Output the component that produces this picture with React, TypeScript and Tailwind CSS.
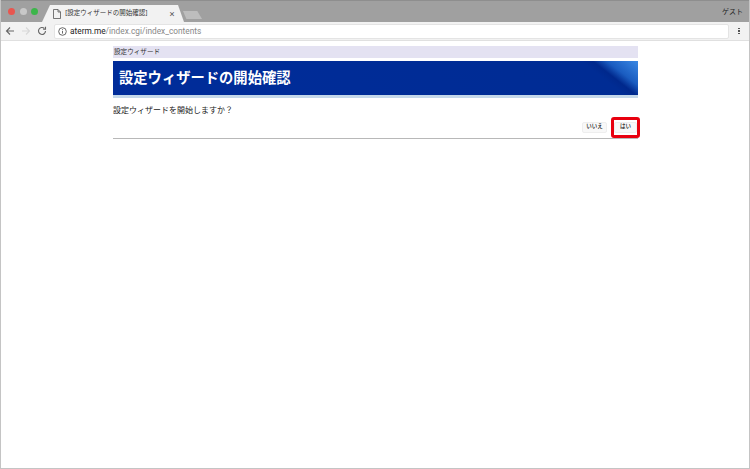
const font = "font-['Inter','Noto_Sans_CJK_JP',sans-serif]";

const App = () => {
  return (
    <div className={`w-[750px] h-[469px] bg-white border border-[#c4c4c4] border-t-0 overflow-hidden flex flex-col ${font}`}>
      {/* title bar */}
      <div className="h-[22px] shrink-0 bg-[#a0a0a0] border-t border-[#8e8e8e] flex items-end relative">
        <div className="flex gap-[4.5px] pl-[7px] self-center w-[41px] shrink-0">
          <span className="w-[7px] h-[7px] shrink-0 rounded-full bg-[#e8564f]" />
          <span className="w-[7px] h-[7px] shrink-0 rounded-full bg-[#c8c8c8]" />
          <span className="w-[7px] h-[7px] shrink-0 rounded-full bg-[#3cb54a]" />
        </div>
        <div className="w-[142px] h-[17px] bg-[#f2f2f2] [clip-path:polygon(0_100%,8px_0,calc(100%-6px)_0,100%_100%)] flex items-center pl-[11px] pr-[9px]">
          <svg width="8" height="10" viewBox="0 0 8 10" fill="none" stroke="#555" strokeWidth="0.8">
            <path d="M.5.5h4.5L7.5 3v6.5H.5zM5 .5V3h2.5" />
          </svg>
          <span className="ml-[4px] text-[6.5px] leading-none text-[#333] flex-1 whitespace-nowrap">[設定ウィザードの開始確認]</span>
          <span className="text-[9px] leading-none text-[#555]">×</span>
        </div>
        <div className="w-[19px] h-[8px] mb-[3px] -ml-[1px] bg-[#bdbdbd] [clip-path:polygon(0_0,75%_0,100%_100%,18%_100%)]" />
        <span className="ml-auto self-center pr-[6px] text-[7px] leading-none text-[#222]">ゲスト</span>
      </div>

      {/* toolbar */}
      <div className="h-[19px] shrink-0 bg-[#f2f2f2] flex items-center border-b border-[#e0e0e0]">
        <div className="w-[53px] flex items-center gap-[6px] pl-[4px]">
          <svg width="10" height="10" viewBox="0 0 10 10" fill="none" stroke="#666" strokeWidth="1.1">
            <path d="M9 5H1.5M5 1.5 1.5 5 5 8.5" />
          </svg>
          <svg width="10" height="10" viewBox="0 0 10 10" fill="none" stroke="#d8d8d8" strokeWidth="1.1">
            <path d="M1 5h7.5M5 1.5 8.5 5 5 8.5" />
          </svg>
          <svg width="10" height="10" viewBox="0 0 10 10" fill="none" stroke="#666" strokeWidth="1.1">
            <path d="M8.5 5A3.5 3.5 0 1 1 7.4 2.4M8.5 .8v2.4H6.1" />
          </svg>
        </div>
        <div className="w-[675px] h-[15px] bg-white border border-[#e4e4e4] rounded-[2px] flex items-center pl-[3px]">
          <svg width="9" height="9" viewBox="0 0 9 9" fill="none" stroke="#444" strokeWidth="0.8">
            <circle cx="4.5" cy="4.5" r="3.8" />
            <path d="M4.5 4v2.6M4.5 2.2v1" />
          </svg>
          <span className="ml-[3px] text-[8.3px] leading-none font-['Roboto',sans-serif] text-[#888]">
            <span className="text-[#222]">aterm.me</span>/index.cgi/index_contents
          </span>
        </div>
        <div className="ml-[9px] flex flex-col gap-[1px]">
          <span className="w-[1.5px] h-[1.5px] bg-[#555]" />
          <span className="w-[1.5px] h-[1.5px] bg-[#555]" />
          <span className="w-[1.5px] h-[1.5px] bg-[#555]" />
        </div>
      </div>

      {/* page */}
      <div className="w-[525px] ml-[112px] mt-[5px]">
        <div className="h-[12px] bg-[#e4e2f2] flex items-center pl-[1px] text-[6.6px] leading-none text-[#333]">設定ウィザード</div>
        <div className="mt-[3px] h-[37px] border-b-[3px] border-[#c4d8ea] bg-[linear-gradient(38deg,#002c9a_0%,#002c94_90%,#00288c_92%,#1a5cc0_94.5%,#3a88e4_100%)] flex items-center pl-[6px]">
          <span className="text-[14.3px] leading-none font-bold text-white">設定ウィザードの開始確認</span>
        </div>
        <p className="mt-[7px] text-[8px] leading-[11px] text-[#222]">設定ウィザードを開始しますか？</p>
        <div className="flex justify-end items-center gap-[7px] pr-[1px] mt-[1px] h-[20px]">
          <button className="w-[25px] h-[11px] rounded-[2px] bg-[#f8f8f8] border border-[#eeeeee] text-[5.5px] font-medium leading-none text-[#111]">いいえ</button>
          <div className="relative">
            <button className="w-[23px] h-[11px] rounded-[2px] bg-[#f8f8f8] border border-[#eeeeee] text-[5.5px] font-medium leading-none text-[#111] block">はい</button>
            <div className="absolute -inset-x-[3px] -inset-y-[5px] border-[3px] border-[#e8000f] rounded-[3px]" />
          </div>
        </div>
        <div className="mt-[1px] h-[1px] bg-[#b8b8b8]" />
      </div>
    </div>
  );
};

export default App;
